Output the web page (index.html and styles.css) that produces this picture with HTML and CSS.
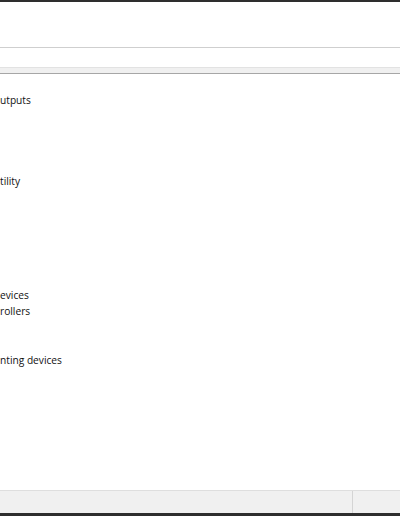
FILE: index.html
```html
<!DOCTYPE html>
<html>
<head>
<meta charset="utf-8">
<link rel="stylesheet" href="styles.css">
</head>
<body>
<div class="window">
  <div class="topbar"></div>
  <div class="toolbar"></div>
  <div class="addr"></div>
  <div class="strip"></div>
  <div class="tree">
    <div class="row">utputs</div>
    <div class="row"></div>
    <div class="row"></div>
    <div class="row"></div>
    <div class="row"></div>
    <div class="row">tility</div>
    <div class="row"></div>
    <div class="row"></div>
    <div class="row"></div>
    <div class="row"></div>
    <div class="row"></div>
    <div class="row"></div>
    <div class="row">evices</div>
    <div class="row">rollers</div>
    <div class="row"></div>
    <div class="row"></div>
    <div class="row">nting devices</div>
  </div>
  <div class="status">
    <div class="status-main"></div>
    <div class="status-side"></div>
  </div>
  <div class="bottombar"></div>
</div>
</body>
</html>
```
FILE: styles.css
```css
html, body {
  margin: 0;
  padding: 0;
  background: #ffffff;
}
.window {
  width: 400px;
  height: 516px;
  display: flex;
  flex-direction: column;
  overflow: hidden;
  font-family: "Open Sans", "Noto Sans", sans-serif;
  font-size: 10.2px;
  color: #111111;
}
.topbar {
  height: 2px;
  background: #2e2e2e;
}
.toolbar {
  height: 45px;
  background: #ffffff;
  border-bottom: 1px solid #cfcfcf;
}
.addr {
  height: 19px;
  background: #ffffff;
}
.strip {
  height: 5px;
  background: #f0f0f0;
  border-top: 1px solid #e2e2e2;
  border-bottom: 1px solid #a6a6a6;
}
.tree {
  flex: 1;
  background: #ffffff;
  padding-top: 18px;
}
.row {
  height: 16.25px;
  line-height: 16px;
  white-space: nowrap;
}
.status {
  height: 22px;
  display: flex;
  background: #f0f0f0;
  border-top: 1px solid #dedede;
}
.status-main {
  width: 352px;
  border-right: 1px solid #d4d4d4;
}
.status-side {
  flex: 1;
}
.bottombar {
  height: 3px;
  background: #2e2e2e;
}
```
